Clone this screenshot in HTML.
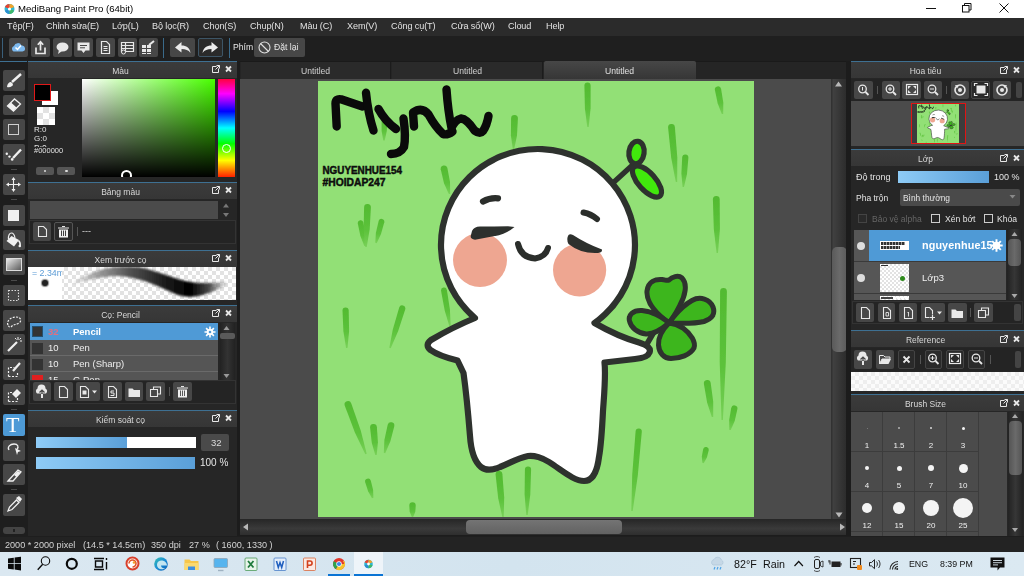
<!DOCTYPE html>
<html><head><meta charset="utf-8">
<style>
*{box-sizing:border-box;margin:0;padding:0}
html,body{width:1024px;height:576px;overflow:hidden;background:#1f1f1f;font-family:"Liberation Sans",sans-serif;font-size:9px;color:#dcdcdc}
.a{position:absolute}
.t{position:absolute;white-space:nowrap}
.tb{position:absolute;background:#474747;border-radius:2px}
.ph{position:absolute;height:17px;padding-right:24px;background:linear-gradient(#3b3b3b,#363636);border-top:1px solid #3e7092;color:#d8d8d8;text-align:center;font-size:8.500px;line-height:18px}
.pb{position:absolute;background:#262626}
.chk{background-color:#fff;background-image:linear-gradient(45deg,#e2e2e2 25%,transparent 25%,transparent 75%,#e2e2e2 75%),linear-gradient(45deg,#e2e2e2 25%,transparent 25%,transparent 75%,#e2e2e2 75%);background-size:8px 8px;background-position:0 0,4px 4px}
.bl{background:linear-gradient(90deg,#8ecbf6,#5a9fd8)}
svg{position:absolute;overflow:visible}
.t,.ph,#bsg div{-webkit-font-smoothing:antialiased;will-change:transform}
</style></head><body>
<!-- title bar -->
<div class="a" style="left:0;top:0;width:1024px;height:18px;background:#fff"></div>
<svg style="left:4px;top:3px" width="11" height="12" viewBox="0 0 11 12"><circle cx="5.5" cy="6" r="5" fill="#2fb7d6"/><path d="M5.5 1a5 5 0 0 0-4.6 3l4.6 2z" fill="#e8432e"/><path d="M5.5 1a5 5 0 0 1 4.6 3L5.5 6z" fill="#f2a32a"/><path d="M1 7.5a5 5 0 0 0 4.5 3.5V6z" fill="#2c8fd0"/><path d="M10 7.5A5 5 0 0 1 5.500 11V6z" fill="#3fb86a"/><circle cx="5.5" cy="6" r="1.6" fill="#fff"/></svg>
<div class="t" style="left:18px;top:3px;font-size:9.6px;color:#000">MediBang Paint Pro (64bit)</div>
<svg style="left:0;top:0" width="1024" height="18" viewBox="0 0 1024 18" fill="none" stroke="#111" stroke-width="1"><path d="M926 8.500h10"/><rect x="962.500" y="5.500" width="6.500" height="6.500"/><path d="M964.500 5.500v-2h6.500v6.500h-2"/><path d="M999.500 3.500l9 9M1008.500 3.500l-9 9"/></svg>
<!-- menu bar -->
<div class="a" style="left:0;top:18px;width:1024px;height:18px;background:#2b2b2b"></div>
<div class="a" id="menu" style="left:0;top:18px;width:1024px;height:18px;font-size:9.1px;letter-spacing:-0.1px;color:#e2e2e2">
<span class="t" style="left:7px;top:3px">Tệp(F)</span>
<span class="t" style="left:46px;top:3px">Chỉnh sửa(E)</span>
<span class="t" style="left:112px;top:3px">Lớp(L)</span>
<span class="t" style="left:152px;top:3px">Bộ lọc(R)</span>
<span class="t" style="left:203px;top:3px">Chọn(S)</span>
<span class="t" style="left:250px;top:3px">Chụp(N)</span>
<span class="t" style="left:300px;top:3px">Màu (C)</span>
<span class="t" style="left:347px;top:3px">Xem(V)</span>
<span class="t" style="left:391px;top:3px">Công cụ(T)</span>
<span class="t" style="left:451px;top:3px">Cửa sổ(W)</span>
<span class="t" style="left:508px;top:3px">Cloud</span>
<span class="t" style="left:546px;top:3px">Help</span>
</div>
<!-- toolbar -->
<div class="a" style="left:0;top:36px;width:1024px;height:25px;background:#1f1f1f"></div>
<div class="a" style="left:2px;top:38px;width:1px;height:20px;background:#3a5f7a"></div>
<div class="a" style="left:163px;top:38px;width:1px;height:20px;background:#3a6a8a"></div>
<div class="a" style="left:229px;top:38px;width:1px;height:20px;background:#3a6a8a"></div>
<div class="tb" style="left:9px;top:38px;width:19px;height:19px"></div>
<div class="tb" style="left:31px;top:38px;width:19px;height:19px"></div>
<div class="tb" style="left:53px;top:38px;width:19px;height:19px"></div>
<div class="tb" style="left:74px;top:38px;width:19px;height:19px"></div>
<div class="tb" style="left:96px;top:38px;width:19px;height:19px"></div>
<div class="tb" style="left:118px;top:38px;width:19px;height:19px"></div>
<div class="tb" style="left:139px;top:38px;width:19px;height:19px"></div>
<div class="tb" style="left:170px;top:38px;width:25px;height:19px"></div>
<div class="tb" style="left:198px;top:38px;width:25px;height:19px;background:#2a2a2a;border:1px solid #3d5566"></div>
<div class="tb" style="left:254px;top:38px;width:51px;height:19px"></div>
<svg style="left:0;top:36px" width="320" height="25" viewBox="0 0 320 25">
<!-- cloud -->
<path d="M13.500 15.500a3 3 0 0 1 .5-5.500 4 4 0 0 1 7.500-.5 3 3 0 0 1 1 6z" fill="#7db9ee"/><path d="M15.500 11.500l2 2 3.500-4" stroke="#fff" stroke-width="1.500" fill="none"/>
<!-- share -->
<path d="M36 11.500v6h9v-6M40.500 14.500v-8M37.800 8.800l2.700-3 2.700 3" stroke="#e8e8e8" stroke-width="1.700" fill="none"/>
<!-- bubble -->
<ellipse cx="62.500" cy="11" rx="6" ry="4.500" fill="#e8e8e8"/><path d="M59 14l-1 4 4-3z" fill="#e8e8e8"/>
<!-- comment -->
<path d="M77.500 6.500h12v8h-4l-2 2.500-2-2.500h-4z" fill="#e8e8e8"/><path d="M80 9.500h7M80 11.800h5" stroke="#474747" stroke-width="1"/>
<!-- doc -->
<path d="M101.500 5.500h5l3 3v9h-8z" fill="none" stroke="#e8e8e8" stroke-width="1.200"/><path d="M103.500 10.500h4M103.500 12.500h4M103.500 14.500h4" stroke="#e8e8e8" stroke-width="1"/>
<!-- list -->
<path d="M121.500 6.500h12v9h-12zM121.500 9.500h12M121.500 12.500h12M125.500 6.500v9" fill="none" stroke="#e8e8e8" stroke-width="1.200"/><circle cx="123.500" cy="16" r="2" fill="#474747" stroke="#e8e8e8"/>
<!-- grid pen -->
<path d="M142 9h4v3h-4zM147 9h4v3h-4zM142 13h4v3h-4zM147 13h4v3h-4zM142 17h4v1h-4zM147 17h4v1h-4z" fill="#e8e8e8"/><path d="M149 9l5-4" stroke="#e8e8e8" stroke-width="2"/>
<!-- undo -->
<path d="M175 11.500l6.500-5.500v3.500c5 0 8 2 9 7.500-2-3-5-4-9-4v3.500z" fill="#ececec"/>
<!-- redo -->
<path d="M218 11.500l-6.500-5.500v3.500c-5 0-8 2-9 7.500 2-3 5-4 9-4v3.500z" fill="#ececec"/>
<!-- reset -->
<circle cx="264.500" cy="11.500" r="5.500" fill="none" stroke="#e0e0e0" stroke-width="1.100"/><path d="M260.500 7.500l8 8" stroke="#e0e0e0" stroke-width="1.100"/>
</svg>
<div class="t" style="left:233px;top:42px;font-size:8.600px;color:#e6e6e6">Phím</div>
<div class="t" style="left:274px;top:42px;font-size:8.600px;color:#e6e6e6">Đặt lại</div>
<!-- left toolbox -->
<div class="a" style="left:0;top:61px;width:28px;height:475px;background:#1e1e1e"></div>
<div class="a" style="left:0;top:61px;width:27px;height:1px;background:#3e7092"></div>

<div id="lt">
<div class="tb" style="left:3px;top:70px;width:22px;height:21px"></div>
<div class="tb" style="left:3px;top:95px;width:22px;height:20px"></div>
<div class="tb" style="left:3px;top:119px;width:22px;height:21px"></div>
<div class="tb" style="left:3px;top:144px;width:22px;height:21px"></div>
<div class="tb" style="left:3px;top:174px;width:22px;height:21px"></div>
<div class="tb" style="left:3px;top:205px;width:22px;height:21px"></div>
<div class="tb" style="left:3px;top:230px;width:22px;height:20px"></div>
<div class="tb" style="left:3px;top:254px;width:22px;height:21px"></div>
<div class="tb" style="left:3px;top:285px;width:22px;height:21px"></div>
<div class="tb" style="left:3px;top:310px;width:22px;height:21px"></div>
<div class="tb" style="left:3px;top:334px;width:22px;height:21px"></div>
<div class="tb" style="left:3px;top:359px;width:22px;height:21px"></div>
<div class="tb" style="left:3px;top:384px;width:22px;height:21px"></div>
<div class="tb" style="left:3px;top:414px;width:22px;height:22px;background:#4d9ad6"></div>
<div class="tb" style="left:3px;top:440px;width:22px;height:21px"></div>
<div class="tb" style="left:3px;top:464px;width:22px;height:21px"></div>
<div class="tb" style="left:3px;top:494px;width:22px;height:22px"></div>
<div class="tb" style="left:3px;top:527px;width:22px;height:7px;border-radius:3px;background:#444"></div>
<div class="a" style="left:11px;top:169px;width:6px;height:1px;background:#4a4a4a"></div>
<div class="a" style="left:11px;top:199px;width:6px;height:1px;background:#4a4a4a"></div>
<div class="a" style="left:11px;top:280px;width:6px;height:1px;background:#4a4a4a"></div>
<div class="a" style="left:11px;top:409px;width:6px;height:1px;background:#4a4a4a"></div>
<div class="a" style="left:11px;top:489px;width:6px;height:1px;background:#4a4a4a"></div>
</div>
<svg style="left:0;top:0" width="28" height="540" viewBox="0 0 28 540" fill="none" stroke="#f0f0f0">
<!-- brush -->
<path d="M21 74l-9 8" stroke-width="2.400"/><path d="M7 87c0-3 2-5 4-5l2 2c0 2-3 4-6 3z" fill="#f0f0f0" stroke="none"/>
<!-- eraser -->
<path d="M7.500 106l7-7 6 5-7 7z" stroke-width="1.300"/><path d="M7.500 106l3.500-3.500 5.500 5-3.500 3.500z" fill="#f0f0f0" stroke="none"/>
<!-- rect -->
<rect x="8.500" y="124.500" width="10" height="10" stroke-width="1" stroke="#cfcfcf"/>
<!-- dotted pen -->
<path d="M21 149.500l-8 8.500" stroke-width="2.400"/><circle cx="6.800" cy="153.800" r="1.200" fill="#f0f0f0" stroke="none"/><circle cx="9.500" cy="156.600" r="1.200" fill="#f0f0f0" stroke="none"/><circle cx="12.200" cy="159.400" r="1.300" fill="#f0f0f0" stroke="none"/>
<!-- move -->
<path d="M13.500 178.500v12M7.500 184.500h12" stroke-width="1.100"/><path d="M13.500 177l-2 3h4zM13.500 192l-2-3h4zM6 184.500l3-2v4zM21 184.500l-3-2v4z" stroke="none" fill="#f0f0f0"/>
<!-- fill rect -->
<rect x="8" y="210" width="11" height="11" fill="#f0f0f0" stroke="none"/>
<!-- bucket -->
<path d="M6.500 241l5-5 7.500 4-5 6.500z" fill="#f0f0f0" stroke="none"/><path d="M8.500 239.500c-.5-4 1-6.500 3-6.500s3 2 3.500 5" stroke-width="1.200"/><path d="M18.500 240.500c1.500 1.500 2 3.500 1.500 5.500" stroke-width="1.500"/><circle cx="19.800" cy="246" r="1.300" fill="#f0f0f0" stroke="none"/>
<!-- gradient -->
<defs><linearGradient id="gg" x1="0" y1="0" x2="1" y2="1"><stop offset="0" stop-color="#eee"/><stop offset="1" stop-color="#555"/></linearGradient></defs>
<rect x="6.500" y="258.500" width="15" height="12" fill="url(#gg)" stroke="#ddd" stroke-width="1"/>
<!-- select rect -->
<rect x="8.500" y="290.500" width="10" height="10" stroke-width="1.100" stroke="#ddd" stroke-dasharray="1.500 1.500"/>
<!-- lasso -->
<path d="M8 325c-2-4 3-8 8-8s6 4 3 6-5 1-7 3-3 1-4-1z" stroke-width="1.200" stroke-dasharray="2 1.300"/>
<!-- wand -->
<path d="M8 351l9-9" stroke-width="2.200"/><path d="M18 337v3M15 338l1.500 1.500M21 338l-1.500 1.500M22 341h-2" stroke-width="1"/>
<!-- select pen -->
<path d="M8.500 376.500v-9h6M8.500 376.500h9v-5" stroke-width="1.200" stroke-dasharray="2 1.500"/><path d="M20 363l-7 8" stroke-width="2.200"/>
<!-- select eraser -->
<path d="M8.500 401.500v-9h4M8.500 401.500h9v-4" stroke-width="1.200" stroke-dasharray="2 1.500"/><path d="M12 394l5-5 4 4-5 5z" fill="#f0f0f0" stroke="none"/>
<!-- lasso pointer -->
<path d="M9 450c-2-3 1-6 5-6s5 3 3 5" stroke-width="1.300"/><path d="M15 448l6 3-3 1-1 3z" fill="#f0f0f0" stroke="none"/>
<!-- knife -->
<path d="M8 481l10-11 3 2-8 9z" stroke-width="1.300"/><path d="M14 475l4-4 2.500 2-4 4z" fill="#f0f0f0" stroke="none"/>
<!-- eyedropper -->
<path d="M8 511l1.500-4 7-7 2.500 2.500-7 7z" stroke-width="1.300"/><path d="M16 498l3-2 3 3-2 3z" fill="#f0f0f0" stroke="none"/>
</svg>
<div class="t" style="left:6px;top:413px;font-family:'Liberation Serif',serif;font-size:22px;line-height:24px;color:#fff">T</div>
<div class="a" style="left:13px;top:529px;width:2px;height:3px;background:#222"></div>
<!-- left panels -->
<div class="pb" style="left:28px;top:61px;width:209px;height:475px"></div>
<div class="a" style="left:237px;top:61px;width:3px;height:475px;background:#1c1c1c"></div>
<!-- Mau -->
<div class="ph" style="left:28px;top:61px;width:209px">Màu</div>
<div class="a" style="left:34px;top:84px;width:17px;height:17px;background:#000;border:1px solid #e01818;z-index:2"></div>
<div class="a" style="left:42px;top:91px;width:16px;height:14px;background:#fff"></div>
<div class="a chk" style="left:37px;top:107px;width:18px;height:18px;background-size:12px 12px;background-position:0 0,6px 6px"></div>
<div class="t" style="left:34px;top:125px;font-size:8px;color:#e0e0e0">R:0</div>
<div class="t" style="left:34px;top:134px;font-size:8px;color:#e0e0e0">G:0</div>
<div class="a" style="left:34px;top:143px;width:20px;height:4px;overflow:hidden"><div class="t" style="left:0;top:0;font-size:8.500px;color:#e0e0e0">B:0</div></div>
<div class="t" style="left:34px;top:146px;font-size:7.500px;color:#e0e0e0">#000000</div>
<div class="tb" style="left:36px;top:167px;width:18px;height:8px;background:#555"></div>
<div class="tb" style="left:57px;top:167px;width:18px;height:8px;background:#555"></div>
<div class="a" style="left:44px;top:170px;width:2px;height:2px;background:#ddd;border-radius:1px"></div>
<div class="a" style="left:65px;top:170px;width:3px;height:2px;background:#ddd;border-radius:1px"></div>
<div class="a" style="left:82px;top:79px;width:133px;height:98px;background:linear-gradient(to top,#000,rgba(0,0,0,0)),linear-gradient(to right,#fff,#48ff00)"></div>
<div class="a" style="left:218px;top:79px;width:17px;height:98px;background:linear-gradient(to bottom,#ff0040 0%,#ff00ff 15%,#0000ff 33%,#00ffff 50%,#00ff00 66%,#ffff00 83%,#ff2000 100%)"></div>
<div class="a" style="left:82px;top:170px;width:133px;height:7px;overflow:hidden"><div class="a" style="left:39px;top:0px;width:11px;height:11px;border:2px solid #fff;border-radius:50%"></div></div>
<div class="a" style="left:222px;top:144px;width:9px;height:9px;border:1.500px solid #fff;border-radius:50%"></div>
<!-- Bang mau -->
<div class="ph" style="left:28px;top:182px;width:209px">Bảng màu</div>
<div class="a" style="left:30px;top:201px;width:188px;height:18px;background:#4b4b4b"></div>
<div class="a" style="left:29px;top:220px;width:207px;height:24px;border:1px solid #333;background:#242424"></div>
<div class="tb" style="left:33px;top:222px;width:18px;height:19px"></div>
<div class="tb" style="left:54px;top:222px;width:19px;height:19px;background:#2a2a2a;border:1px solid #555"></div>
<div class="a" style="left:77px;top:227px;width:1px;height:9px;background:#555"></div>
<div class="t" style="left:82px;top:226px;font-size:9px;color:#ddd">---</div>
<!-- Xem truoc co -->
<div class="ph" style="left:28px;top:250px;width:209px">Xem trước cọ</div>
<div class="a chk" style="left:28px;top:267px;width:208px;height:33px;background-size:8px 8px;background-position:0 0,4px 4px"></div>
<div class="a" style="left:28px;top:267px;width:34px;height:33px;background:#fff"></div>
<div class="a" style="left:28px;top:267px;width:34px;height:12px;overflow:hidden"><div class="t" style="left:3.500px;top:1px;font-size:8.800px;color:#5b9bd5">= 2.34m</div></div>
<div class="a" style="left:42px;top:280px;width:6px;height:6px;background:#222;border-radius:50%;box-shadow:0 0 1px 1px #888"></div>
<!-- Co: Pencil -->
<div class="ph" style="left:28px;top:305px;width:209px">Cọ: Pencil</div>
<div class="a" style="left:30px;top:323px;width:188px;height:57px;background:#555;overflow:hidden">
 <div class="a" style="left:0;top:0;width:188px;height:17px;background:#4f9ad6"></div>
 <div class="a" style="left:0;top:32px;width:188px;height:1px;background:#6a6a6a"></div>
 <div class="a" style="left:0;top:48px;width:188px;height:1px;background:#6a6a6a"></div>
 <div class="a" style="left:2px;top:3px;width:11px;height:11px;background:#333;border:1px solid #24506f"></div>
 <div class="a" style="left:2px;top:20px;width:11px;height:11px;background:#333"></div>
 <div class="a" style="left:2px;top:36px;width:11px;height:11px;background:#333"></div>
 <div class="a" style="left:2px;top:52px;width:11px;height:11px;background:#e02020"></div>
 <div class="t" style="left:18px;top:3px;font-size:9.500px;font-weight:bold;color:#e07080">32</div>
 <div class="t" style="left:43px;top:3px;font-size:9.500px;font-weight:bold;color:#fff">Pencil</div>
 <div class="t" style="left:18px;top:19px;font-size:9.500px;color:#eee">10</div>
 <div class="t" style="left:43px;top:19px;font-size:9.500px;color:#eee">Pen</div>
 <div class="t" style="left:18px;top:35px;font-size:9.500px;color:#eee">10</div>
 <div class="t" style="left:43px;top:35px;font-size:9.500px;color:#eee">Pen (Sharp)</div>
 <div class="t" style="left:18px;top:51px;font-size:9.500px;color:#eee">15</div>
 <div class="t" style="left:43px;top:51px;font-size:9.500px;color:#eee">G Pen</div>
</div>
<svg style="left:204px;top:326px" width="12" height="12" viewBox="0 0 12 12"><circle cx="6" cy="6" r="3.300" fill="#fff"/><path d="M6 0.500v11M0.500 6h11M2.100 2.100l7.800 7.800M9.900 2.100l-7.800 7.800" stroke="#fff" stroke-width="1.600"/><circle cx="6" cy="6" r="1.300" fill="#4f9ad6"/></svg>
<div class="a" style="left:220px;top:323px;width:15px;height:57px;background:linear-gradient(90deg,#222,#333,#222)"></div>
<div class="a" style="left:220px;top:333px;width:15px;height:6px;background:#5a5a5a;border-radius:2px"></div>
<div class="a" style="left:29px;top:380px;width:207px;height:24px;border:1px solid #333;background:#242424"></div>
<div class="tb" style="left:33px;top:382px;width:18px;height:19px"></div>
<div class="tb" style="left:54px;top:382px;width:19px;height:19px"></div>
<div class="tb" style="left:76px;top:382px;width:24px;height:19px"></div>
<div class="tb" style="left:103px;top:382px;width:19px;height:19px"></div>
<div class="tb" style="left:125px;top:382px;width:18px;height:19px"></div>
<div class="tb" style="left:146px;top:382px;width:19px;height:19px"></div>
<div class="a" style="left:169px;top:387px;width:1px;height:9px;background:#555"></div>
<div class="tb" style="left:173px;top:382px;width:19px;height:19px"></div>
<!-- Kiem soat co -->
<div class="ph" style="left:28px;top:410px;width:209px">Kiểm soát cọ</div>
<div class="a" style="left:36px;top:437px;width:160px;height:11px;background:#fff"></div>
<div class="a bl" style="left:36px;top:437px;width:91px;height:11px"></div>
<div class="a" style="left:201px;top:434px;width:28px;height:17px;background:#4a4a4a;border-radius:2px"></div>
<div class="t" style="left:211px;top:437px;font-size:9.500px;color:#ddd">32</div>
<div class="a bl" style="left:36px;top:456.500px;width:159px;height:12px"></div>
<div class="t" style="left:200px;top:457px;font-size:10px;color:#e6e6e6">100 %</div>
<!-- panel-header icons -->
<svg style="left:0;top:0" width="240" height="430" viewBox="0 0 240 430" fill="none" stroke="#e8e8e8">
<g id="phi"><path d="M216.500 66.500h-4v6h6v-4" stroke-width="1"/><path d="M215.500 69.500l4-4M216.500 65.500h3v3" stroke-width="1"/><path d="M226 66.500l5 5M231 66.500l-5 5" stroke-width="1.800"/></g>
<use href="#phi" y="121"/><use href="#phi" y="189"/><use href="#phi" y="244"/><use href="#phi" y="349"/>
<!-- palette arrows -->
<path d="M223 207.500l3-4 3 4zM223 213l3 4 3-4z" fill="#777" stroke="none"/>
<!-- brush list arrows -->
<path d="M223.500 330l3-4 3 4zM223.500 374l3 4 3-4z" fill="#999" stroke="none"/>
<!-- palette toolbar: new, trash -->
<path d="M38.500 226.500h5l3 3v7h-8z" stroke-width="1.100"/>
<path d="M59 229.500h9v8h-9z" fill="#f0f0f0" stroke="none"/><path d="M58 228h11M62 226.500h3" stroke-width="1.200"/><path d="M61.500 230.500v5.500M63.500 230.500v5.500M65.500 230.500v5.500" stroke="#2a2a2a" stroke-width="0.900"/>
<!-- brush toolbar icons -->
<path d="M37 393.500a3 3 0 0 1 .5-5 4 4 0 0 1 8 0 3 3 0 0 1 .5 5z" fill="#e8e8e8" stroke="none"/><path d="M42 390v8M39.500 392.500l2.500-2.500 2.500 2.500" stroke="#474747" stroke-width="1.200"/><path d="M42 394v4" stroke="#e8e8e8" stroke-width="2"/>
<path d="M59.500 386.500h5l3 3v8h-8z" stroke-width="1.100"/>
<path d="M80.500 386.500h5l3 3v8h-8z" stroke-width="1.100"/><rect x="82.500" y="390.500" width="4" height="4" fill="#e8e8e8" stroke="none"/><path d="M92 390.500h5l-2.500 3z" fill="#e8e8e8" stroke="none"/>
<path d="M108.500 386.500h5l3 3v8h-8z" stroke-width="1.100"/><path d="M114 391h-3v2h3v2.500h-3.500" stroke-width="1"/>
<path d="M128.500 388.500h4l1.500 1.500h6v7h-11.500z" fill="#e8e8e8" stroke="none"/>
<path d="M150.500 389.500h7v7h-7z" stroke-width="1.100"/><path d="M153.500 389.500v-2.500h7v7h-3" stroke-width="1.100"/>
<path d="M178 389.500h9v8h-9z" fill="#f0f0f0" stroke="none"/><path d="M177 388h11M181 386.500h3" stroke-width="1.200"/><path d="M180.500 390.500v5.500M182.500 390.500v5.500M184.500 390.500v5.500" stroke="#474747" stroke-width="0.900"/>
</svg>
<!-- brush preview stroke -->
<svg style="left:62px;top:267px" width="174" height="33" viewBox="0 0 174 33"><defs><linearGradient id="bs" x1="12" x2="165" gradientUnits="userSpaceOnUse"><stop offset="0" stop-color="#aaa" stop-opacity="0.250"/><stop offset="0.150" stop-color="#888" stop-opacity="0.800"/><stop offset="0.350" stop-color="#555"/><stop offset="0.600" stop-color="#1a1a1a"/><stop offset="0.760" stop-color="#000"/><stop offset="0.880" stop-color="#333" stop-opacity="0.900"/><stop offset="1" stop-color="#888" stop-opacity="0.200"/></linearGradient><clipPath id="bsc"><rect width="174" height="33"/></clipPath><filter id="bf"><feGaussianBlur stdDeviation="0.900"/></filter></defs>
<path clip-path="url(#bsc)" filter="url(#bf)" d="M12,14.500C20,10 28,6.500 33,4.700C42,1.500 50,0 56,0C64,-0.500 70,-0.500 77,0.300C85,1.500 90,3.500 96.500,5.600C104,8 110,10.500 117.500,12.600C125,14.800 132,16 138.600,16.100C148,16.200 156,15.500 164,14.400L164,17.900C159,21 153,24 147.400,25.800C140,28.500 133,30 126.300,29.700C120,29.500 115,28 110.500,25.800C104,22.500 98,20 93,17.900C86,15 80,13 73.600,11.700C67,10.200 60,9 54.200,9.100C47,9.300 40,10.500 33,11.700C26,13 19,15 12,17Z" fill="url(#bs)"/></svg>
<!-- center -->
<div class="a" style="left:240px;top:61px;width:610px;height:475px;background:#4b4b4b"></div>
<div class="a" style="left:240px;top:61px;width:610px;height:18px;background:#252525"></div>
<div class="a" style="left:240px;top:61px;width:610px;height:1px;background:#1a1a1a"></div>
<div class="a" style="left:241px;top:62px;width:150px;height:17px;background:#2a2a2a;border-right:1px solid #1c1c1c"></div>
<div class="a" style="left:392px;top:62px;width:151px;height:17px;background:#2a2a2a;border-right:1px solid #1c1c1c"></div>
<div class="a" style="left:544px;top:61px;width:152px;height:18px;background:linear-gradient(#474747,#363636);border-radius:2px 2px 0 0"></div>
<div class="t" style="left:300.500px;top:66px;font-size:8.600px;color:#d0d0d0">Untitled</div>
<div class="t" style="left:452.500px;top:66px;font-size:8.600px;color:#d0d0d0">Untitled</div>
<div class="t" style="left:604.500px;top:66px;font-size:8.600px;color:#e0e0e0">Untitled</div>
<!-- scrollbars -->
<div class="a" style="left:831px;top:79px;width:16px;height:440px;background:linear-gradient(90deg,#2e2e2e,#404040 15%,#2b2b2b)"></div>
<div class="a" style="left:832px;top:246.500px;width:14.500px;height:105.500px;background:linear-gradient(90deg,#5a5a5a,#6a6a6a,#5a5a5a);border-radius:5px"></div>
<div class="a" style="left:240px;top:519px;width:606px;height:16px;background:linear-gradient(#262626,#3a3a3a 60%,#2e2e2e)"></div>
<div class="a" style="left:466px;top:519.500px;width:156px;height:14.500px;background:linear-gradient(#747474,#626262);border-radius:4px"></div>
<div class="a" style="left:240px;top:535px;width:610px;height:1px;background:#1c1c1c"></div>
<div class="a" style="left:846px;top:61px;width:5px;height:475px;background:#1c1c1c"></div>
<svg style="left:240px;top:79px" width="610" height="458" viewBox="0 0 610 458"><path d="M595,7.500l3.500,-5 3.500,5zM595.500,433.500l3.500,5 3.500,-5zM8,451.500l-5,-3.500 5,-3.500zM600,451.500l5,-3.500 -5,-3.500z" fill="#b8b8b8"/></svg>
<!-- canvas art -->
<svg style="left:318px;top:81px" width="436" height="436" viewBox="0 0 436 436">
<defs><linearGradient id="gg2" x1="0" y1="0" x2="0" y2="1"><stop offset="0" stop-color="#52ba30"/><stop offset="0.6" stop-color="#5cc23b"/><stop offset="1" stop-color="#78d058"/></linearGradient><filter id="gb" x="-50%" y="-10%" width="200%" height="120%"><feGaussianBlur stdDeviation="0.500"/></filter></defs>
<g id="art"><rect width="436" height="436" fill="#92e076"/>
<g id="grass" fill="url(#gg2)" filter="url(#gb)">
<!--GRASS--><path d="M193.1,37.4A3.4,3.4 0 0 1 199.9,37.6L199.0,54.4L196.2,68.0L194.8,68.0L192.9,54.2Z"/>
<path d="M63.6,38.4A2.9,2.9 0 0 1 69.4,38.6L68.8,50.1L66.7,59.5L65.3,59.5L63.6,50.0Z"/>
<path d="M122.7,88.2A3.4,3.4 0 0 1 129.3,86.8L132.0,100.9L132.2,112.9L130.8,113.1L126.0,102.2Z"/>
<path d="M39.7,142.0A2.9,2.9 0 0 1 45.3,141.0L47.5,153.9L47.7,164.9L46.3,165.1L42.4,154.9Z"/>
<path d="M46.1,126.4A3.4,3.4 0 0 1 52.9,126.6L51.7,148.3L48.7,166.0L47.3,166.0L45.6,148.1Z"/>
<path d="M60.7,139.8A2.9,2.9 0 0 1 66.3,141.2L63.0,153.0L58.7,162.2L57.3,161.8L57.9,151.7Z"/>
<path d="M266.4,4.5A3.1,3.1 0 0 1 272.6,4.5L272.6,27.3L270.7,46.0L269.3,46.0L266.9,27.4Z"/>
<path d="M396.9,9.1A3.1,3.1 0 0 1 403.1,7.9L405.3,21.5L405.2,32.9L403.8,33.1L399.7,22.5Z"/>
<path d="M350.1,46.8A3.4,3.4 0 0 1 356.9,46.2L359.3,76.2L359.2,100.9L357.8,101.1L353.2,76.8Z"/>
<path d="M364.2,76.3A3.1,3.1 0 0 1 370.4,76.7L369.0,92.9L366.0,106.0L364.6,106.0L363.4,92.5Z"/>
<path d="M394.9,118.6A3.4,3.4 0 0 1 401.7,118.4L401.9,147.9L400.0,172.0L398.6,172.0L395.8,148.0Z"/>
<path d="M123.1,210.0A2.9,2.9 0 0 1 128.9,209.0L131.9,228.6L132.7,244.9L131.3,245.1L126.7,229.5Z"/>
<path d="M24.5,229.6A3.1,3.1 0 0 1 30.7,229.4L31.1,250.0L29.5,267.0L28.1,267.0L25.4,250.2Z"/>
<path d="M81.2,226.6A3.1,3.1 0 0 1 87.2,228.4L80.2,250.1L72.7,267.2L71.3,266.8L74.8,248.4Z"/>
<path d="M402.1,210.5A3.4,3.4 0 0 1 408.9,210.5L407.8,281.2L404.9,339.0L403.5,339.0L401.7,281.1Z"/>
<path d="M26.8,324.7A3.4,3.4 0 0 1 33.2,322.3L42.8,349.7L48.7,372.8L47.3,373.2L37.0,351.8Z"/>
<path d="M52.1,346.8A3.4,3.4 0 0 1 58.9,346.2L59.9,361.3L58.7,373.9L57.3,374.1L53.8,361.9Z"/>
<path d="M69.7,343.7A3.4,3.4 0 0 1 76.3,345.3L72.4,360.3L67.2,372.2L65.8,371.8L66.4,358.9Z"/>
<path d="M47.2,401.3A2.9,2.9 0 0 1 52.8,399.7L55.1,408.9L55.4,416.8L54.0,417.2L50.1,410.3Z"/>
<path d="M91.3,424.5A3.1,3.1 0 0 1 97.7,424.5L97.3,430.8L95.2,436.0L93.8,436.0L91.7,430.8Z"/>
<path d="M177.6,393.8A3.4,3.4 0 0 1 184.4,393.2L186.2,416.6L185.7,435.9L184.3,436.1L180.2,417.2Z"/>
<path d="M206.9,388.4A3.1,3.1 0 0 1 213.1,388.6L212.3,413.6L209.7,434.0L208.3,434.0L206.6,413.5Z"/>
<path d="M317.6,350.2A3.1,3.1 0 0 1 323.8,350.8L319.8,394.5L314.7,430.1L313.3,429.9L314.2,394.0Z"/>
<path d="M385.9,303.0A3.4,3.4 0 0 1 392.7,302.0L395.2,320.5L395.2,335.9L393.8,336.1L389.1,321.4Z"/>
<path d="M413.2,326.9A3.1,3.1 0 0 1 419.4,328.1L416.7,339.9L412.7,349.1L411.3,348.9L411.2,338.8Z"/>
<path d="M385.2,367.9A2.9,2.9 0 0 1 390.8,369.1L388.9,376.5L385.7,382.2L384.3,381.8L383.8,375.4Z"/><!--/GRASS-->
</g>
<!--BODY-->
<g stroke="#2e322e" stroke-linejoin="round" stroke-linecap="round">
<!-- sprout -->
<path d="M296,101L313.500,85" fill="none" stroke-width="5.200"/>
<ellipse cx="318.500" cy="71.500" rx="7.600" ry="11.300" transform="rotate(8 318.500 71.500)" fill="#41e80c" stroke-width="5.200"/>
<ellipse cx="329" cy="100.500" rx="19.500" ry="8.600" transform="rotate(48 329 100.500)" fill="#41e80c" stroke-width="5.200"/>
<!-- clover -->
<g fill="#3db61d" stroke-width="5">
<path d="M351,242L338,247.500L329.500,262" fill="none" stroke-width="5.500"/>
<path d="M351,242C340,234 328,222 329,210C330,200 338,198 344,198.500C348,199 349,200 351,199C354,196 360,193.500 364,197C370,203 367,215 362,224C359,230 355,237 351,242Z"/>
<path d="M351,242C358,232 366,224 374,219.500C382,215 392,218 395,226C397.500,233 394,238 386,240.500C376,243 362,242.500 351,242Z"/>
<path d="M351,242C344,236 334,230.500 324,229.500C315,229 310,234 311.500,240C313,247 320,252 328,253C336,253.500 344,248 351,242Z"/>
<path d="M351,242C345,248 340,256 340.500,264C341,272 346,277.500 353,277.500C362,277.500 372,274 376,267C378,261 373,253 365,247C360,244 355,242.500 351,242Z"/>
</g>
<!-- body -->
<path d="M157,237A97,96 0 1 1 276.500,242Q300,255.500 321,261.500Q334,265.500 331.500,271.500Q329.500,277 317,278L286.500,281.500C288,295 286,315 285,330C284,350 283,365 281,376C279,392 274,400 266,400C256,400 245,390 231,381C225,377 216,374 210,375C200,377 192,382 182,386C175,389 168,390 163,386C157,381 153,370 152,355C150,330 148,310 145.500,292L139.500,279.500Q121,275 112.500,269Q106.500,264 113,259Q135,246 157,237Z" fill="#fff" stroke-width="6.200"/>
</g>
<!-- face -->
<circle cx="162" cy="179" r="27" fill="#eea691"/>
<circle cx="261.600" cy="189" r="26.600" fill="#eea691"/>
<g stroke="#2b2e2b" stroke-linecap="round" fill="none">
<path d="M154,150Q156,145.500 162,145.500L190,145.300L196.500,146Q190,151.500 181,154.300L157,158.700Q151.500,158 153,154Z" fill="#2d302d" stroke="none"/>
<path d="M250.500,154Q252,152.300 255,154Q268,162.500 284,168.500Q284.500,171.500 280,172Q263,173 250.500,163Q248,158 250.500,154Z" fill="#2d302d" stroke="none"/>
<path d="M165,120.500Q172,116.500 180,117.300" stroke-width="6.200"/>
<path d="M265.500,131.500Q273,133 279,138" stroke-width="6"/>
<path d="M200,163Q203,176.500 217,177.500Q227.500,176 230,167" stroke-width="6"/>
</g>
<!--/BODY-->
<!--TEXT-->
<g stroke="#0a0a0a" stroke-width="8.400" stroke-linecap="round" stroke-linejoin="round" fill="none">
<path d="M18.700,45.500L17.500,22.500Q17.500,17.300 23,18.300L44.500,25.500"/>
<path d="M48,11.800Q50,32 55.500,49.500"/>
<path d="M60.500,28Q67,40 78,48"/>
<path d="M85.500,37.500Q88,55 86,66Q82,73 73,73"/>
<path d="M96,45.500L95,31.500Q104,25.500 110.500,33.500Q117,45.500 125,53Q129,54.500 134.500,50.500"/>
<path d="M128.500,8.500Q130,30 133.500,47Q137,39 143,37.500Q149,38 156.500,49.500Q162,53.500 165,50Q169,44 170.500,35"/>
</g>
<g font-family="Liberation Sans" font-weight="bold" fill="#0d0d0d" stroke="#0d0d0d" stroke-width="0.450" font-size="10.400">
<text x="4.500" y="92.800" textLength="79.500" lengthAdjust="spacingAndGlyphs">NGUYENHUE154</text>
<text x="4.500" y="104.500" textLength="63" lengthAdjust="spacingAndGlyphs">#HOIDAP247</text>
</g>
<!--/TEXT-->
</g></svg>
<!-- right panels -->
<div class="pb" style="left:851px;top:61px;width:173px;height:475px"></div>
<!-- Hoa tieu -->
<div class="ph" style="left:851px;top:61px;width:173px">Hoa tiêu</div>
<div class="a" style="left:851px;top:79px;width:173px;height:22px;background:#242424"></div>
<div class="tb" style="left:854px;top:81px;width:19px;height:18px"></div>
<div class="tb" style="left:882px;top:81px;width:18px;height:18px"></div>
<div class="tb" style="left:902px;top:81px;width:19px;height:18px"></div>
<div class="tb" style="left:924px;top:81px;width:18px;height:18px"></div>
<div class="tb" style="left:951px;top:81px;width:18px;height:18px"></div>
<div class="tb" style="left:971px;top:81px;width:19px;height:18px;background:#2a2a2a;border:1px solid #444"></div>
<div class="tb" style="left:993px;top:81px;width:18px;height:18px"></div>
<div class="a" style="left:877px;top:86px;width:1px;height:8px;background:#555"></div>
<div class="a" style="left:946px;top:86px;width:1px;height:8px;background:#555"></div>
<div class="a" style="left:1016px;top:82px;width:6px;height:16px;background:#444;border-radius:2px"></div>
<div class="a" style="left:851px;top:101px;width:173px;height:45px;background:#4b4b4b"></div>
<div class="a" style="left:910.500px;top:102.500px;width:55px;height:41.500px;border:1.500px solid #e01414;background:#3c3c3c"></div>
<svg style="left:917px;top:104px;overflow:hidden" width="42" height="39" viewBox="0 0 436 436" preserveAspectRatio="none"><use href="#art"/></svg>
<!-- Lop -->
<div class="ph" style="left:851px;top:149px;width:173px">Lớp</div>
<div class="t" style="left:856px;top:172px;font-size:9px;color:#e4e4e4">Độ trong</div>
<div class="a bl" style="left:898px;top:171px;width:91px;height:12px"></div>
<div class="t" style="left:994px;top:172px;font-size:9px;color:#e4e4e4">100 %</div>
<div class="t" style="left:856px;top:193px;font-size:8.500px;color:#e4e4e4">Pha trộn</div>
<div class="a" style="left:900px;top:189px;width:120px;height:17px;background:#4a4a4a;border-radius:2px"></div>
<div class="t" style="left:903px;top:193px;font-size:8.400px;color:#e4e4e4">Bình thường</div>
<div class="a" style="left:858px;top:214px;width:9px;height:9px;border:1px solid #444;background:#2a2a2a"></div>
<div class="t" style="left:872px;top:213.500px;font-size:8.500px;color:#666">Bảo vệ alpha</div>
<div class="a" style="left:931px;top:214px;width:9px;height:9px;border:1px solid #ccc;background:#262626"></div>
<div class="t" style="left:944.500px;top:213.500px;font-size:8.600px;color:#e4e4e4">Xén bớt</div>
<div class="a" style="left:984px;top:214px;width:9px;height:9px;border:1px solid #ccc;background:#262626"></div>
<div class="t" style="left:997px;top:213.500px;font-size:8.600px;color:#e4e4e4">Khóa</div>
<!-- layer list -->
<div class="a" style="left:854px;top:230px;width:152px;height:70px;background:#565656;overflow:hidden">
 <div class="a" style="left:0;top:0;width:152px;height:31px;background:#4f9ad6"></div>
 <div class="a" style="left:0;top:0;width:15px;height:71px;background:#565656"></div>
 <div class="a" style="left:0;top:31px;width:152px;height:1px;background:#3a3a3a"></div>
 <div class="a" style="left:0;top:63px;width:152px;height:1px;background:#3a3a3a"></div>
 <div class="a" style="left:3px;top:12px;width:8px;height:8px;border-radius:50%;background:#ddd"></div>
 <div class="a" style="left:3px;top:44px;width:8px;height:8px;border-radius:50%;background:#ddd"></div>
 <div class="a" style="left:26px;top:11px;width:29px;height:9px;background:#fff"></div>
 <div class="a" style="left:27px;top:12px;width:24px;height:3px;background:repeating-linear-gradient(90deg,#333 0 2px,#999 2px 3px)"></div>
 <div class="a" style="left:27px;top:16px;width:19px;height:3px;background:repeating-linear-gradient(90deg,#333 0 2px,#999 2px 3px)"></div>
 <div class="a chk" style="left:26px;top:34px;width:29px;height:28px;background-size:4px 4px;background-position:0 0,2px 2px"></div>
 <div class="a" style="left:46px;top:46px;width:5px;height:5px;border-radius:50%;background:#2e8a1c"></div>
 <div class="a" style="left:27px;top:35px;width:7px;height:1px;background:#333"></div>
 <div class="a chk" style="left:26px;top:66px;width:29px;height:8px;background-size:4px 4px"></div>
 <div class="a" style="left:27px;top:67px;width:12px;height:2px;background:#444"></div>
 <div class="t" style="left:68px;top:9px;font-weight:bold;font-size:10.800px;letter-spacing:0.1px;color:#fff">nguyenhue15</div>
 <div class="t" style="left:68px;top:42px;font-size:9.500px;color:#f0f0f0">Lớp3</div>
</div>
<svg style="left:990px;top:239px" width="13" height="13" viewBox="0 0 12 12"><circle cx="6" cy="6" r="3.500" fill="#fff"/><path d="M6 0.300v11.400M0.300 6h11.400M2 2l8 8M10 2l-8 8" stroke="#fff" stroke-width="1.800"/></svg>
<div class="a" style="left:1007px;top:229px;width:15px;height:71px;background:linear-gradient(90deg,#222,#363636,#222)"></div>
<div class="a" style="left:1008px;top:239px;width:13px;height:27px;background:linear-gradient(90deg,#555,#6a6a6a,#555);border-radius:4px"></div>
<div class="a" style="left:852px;top:301px;width:171px;height:23px;background:#242424;border:1px solid #333"></div>
<div class="tb" style="left:856px;top:303px;width:18px;height:19px"></div>
<div class="tb" style="left:878px;top:303px;width:17px;height:19px"></div>
<div class="tb" style="left:899px;top:303px;width:18px;height:19px"></div>
<div class="tb" style="left:921px;top:303px;width:24px;height:19px"></div>
<div class="tb" style="left:948px;top:303px;width:19px;height:19px"></div>
<div class="a" style="left:970px;top:308px;width:1px;height:9px;background:#555"></div>
<div class="tb" style="left:974px;top:303px;width:19px;height:19px"></div>
<div class="a" style="left:1014px;top:304px;width:7px;height:17px;background:#444;border-radius:2px"></div>
<!-- Reference -->
<div class="ph" style="left:851px;top:330px;width:173px">Reference</div>
<div class="a" style="left:851px;top:348px;width:173px;height:23px;background:#242424"></div>
<div class="tb" style="left:854px;top:350px;width:18px;height:19px"></div>
<div class="tb" style="left:876px;top:350px;width:18px;height:19px"></div>
<div class="tb" style="left:898px;top:350px;width:17px;height:19px;background:#2a2a2a;border:1px solid #444"></div>
<div class="a" style="left:920px;top:355px;width:1px;height:9px;background:#555"></div>
<div class="tb" style="left:925px;top:350px;width:17px;height:19px;background:#2a2a2a;border:1px solid #444"></div>
<div class="tb" style="left:946px;top:350px;width:18px;height:19px;background:#2a2a2a;border:1px solid #444"></div>
<div class="tb" style="left:968px;top:350px;width:17px;height:19px;background:#2a2a2a;border:1px solid #444"></div>
<div class="a" style="left:990px;top:355px;width:1px;height:9px;background:#555"></div>
<div class="a" style="left:1015px;top:351px;width:6px;height:17px;background:#444;border-radius:2px"></div>
<div class="a" style="left:851px;top:372px;width:173px;height:19px;background-color:#fbfbfb;background-image:linear-gradient(45deg,#eee 25%,transparent 25%,transparent 75%,#eee 75%),linear-gradient(45deg,#eee 25%,transparent 25%,transparent 75%,#eee 75%);background-size:8px 8px;background-position:0 0,4px 4px"></div>
<!-- Brush Size -->
<div class="ph" style="left:851px;top:394px;width:173px">Brush Size</div>
<div class="a" style="left:851px;top:412px;width:156px;height:124px;background:#4b4b4b"></div>
<div id="bsg" class="a" style="left:851px;top:412px;width:128px;height:124px;overflow:hidden;background:#3c3c3c">
<div class="a" style="left:0px;top:0px;width:31px;height:39px;background:#4b4b4b"></div>
<div class="a" style="left:15.50px;top:15.50px;width:1px;height:1px;border-radius:50%;background:#f4f4f4;opacity:0.35"></div>
<div class="a" style="left:0px;top:29px;width:32px;text-align:center;font-size:8px;line-height:9px;color:#f0f0f0">1</div>
<div class="a" style="left:32px;top:0px;width:31px;height:39px;background:#4b4b4b"></div>
<div class="a" style="left:47.25px;top:15.25px;width:1.5px;height:1.5px;border-radius:50%;background:#f4f4f4;opacity:0.55"></div>
<div class="a" style="left:32px;top:29px;width:32px;text-align:center;font-size:8px;line-height:9px;color:#f0f0f0">1.5</div>
<div class="a" style="left:64px;top:0px;width:31px;height:39px;background:#4b4b4b"></div>
<div class="a" style="left:79.00px;top:15.00px;width:2px;height:2px;border-radius:50%;background:#f4f4f4;opacity:0.85"></div>
<div class="a" style="left:64px;top:29px;width:32px;text-align:center;font-size:8px;line-height:9px;color:#f0f0f0">2</div>
<div class="a" style="left:96px;top:0px;width:31px;height:39px;background:#4b4b4b"></div>
<div class="a" style="left:110.50px;top:14.50px;width:3px;height:3px;border-radius:50%;background:#f4f4f4;opacity:1"></div>
<div class="a" style="left:96px;top:29px;width:32px;text-align:center;font-size:8px;line-height:9px;color:#f0f0f0">3</div>
<div class="a" style="left:0px;top:40px;width:31px;height:39px;background:#4b4b4b"></div>
<div class="a" style="left:14.00px;top:54.00px;width:4px;height:4px;border-radius:50%;background:#f4f4f4;opacity:1"></div>
<div class="a" style="left:0px;top:69px;width:32px;text-align:center;font-size:8px;line-height:9px;color:#f0f0f0">4</div>
<div class="a" style="left:32px;top:40px;width:31px;height:39px;background:#4b4b4b"></div>
<div class="a" style="left:45.50px;top:53.50px;width:5px;height:5px;border-radius:50%;background:#f4f4f4;opacity:1"></div>
<div class="a" style="left:32px;top:69px;width:32px;text-align:center;font-size:8px;line-height:9px;color:#f0f0f0">5</div>
<div class="a" style="left:64px;top:40px;width:31px;height:39px;background:#4b4b4b"></div>
<div class="a" style="left:77.00px;top:53.00px;width:6px;height:6px;border-radius:50%;background:#f4f4f4;opacity:1"></div>
<div class="a" style="left:64px;top:69px;width:32px;text-align:center;font-size:8px;line-height:9px;color:#f0f0f0">7</div>
<div class="a" style="left:96px;top:40px;width:31px;height:39px;background:#4b4b4b"></div>
<div class="a" style="left:107.50px;top:51.50px;width:9px;height:9px;border-radius:50%;background:#f4f4f4;opacity:1"></div>
<div class="a" style="left:96px;top:69px;width:32px;text-align:center;font-size:8px;line-height:9px;color:#f0f0f0">10</div>
<div class="a" style="left:0px;top:80px;width:31px;height:39px;background:#4b4b4b"></div>
<div class="a" style="left:11.00px;top:91.00px;width:10px;height:10px;border-radius:50%;background:#f4f4f4;opacity:1"></div>
<div class="a" style="left:0px;top:109px;width:32px;text-align:center;font-size:8px;line-height:9px;color:#f0f0f0">12</div>
<div class="a" style="left:32px;top:80px;width:31px;height:39px;background:#4b4b4b"></div>
<div class="a" style="left:42.00px;top:90.00px;width:12px;height:12px;border-radius:50%;background:#f4f4f4;opacity:1"></div>
<div class="a" style="left:32px;top:109px;width:32px;text-align:center;font-size:8px;line-height:9px;color:#f0f0f0">15</div>
<div class="a" style="left:64px;top:80px;width:31px;height:39px;background:#4b4b4b"></div>
<div class="a" style="left:72.00px;top:88.00px;width:16px;height:16px;border-radius:50%;background:#f4f4f4;opacity:1"></div>
<div class="a" style="left:64px;top:109px;width:32px;text-align:center;font-size:8px;line-height:9px;color:#f0f0f0">20</div>
<div class="a" style="left:96px;top:80px;width:31px;height:39px;background:#4b4b4b"></div>
<div class="a" style="left:102.00px;top:86.00px;width:20px;height:20px;border-radius:50%;background:#f4f4f4;opacity:1"></div>
<div class="a" style="left:96px;top:109px;width:32px;text-align:center;font-size:8px;line-height:9px;color:#f0f0f0">25</div>
<div class="a" style="left:0px;top:120px;width:31px;height:39px;background:#4b4b4b"></div>
<div class="a" style="left:32px;top:120px;width:31px;height:39px;background:#4b4b4b"></div>
<div class="a" style="left:64px;top:120px;width:31px;height:39px;background:#4b4b4b"></div>
<div class="a" style="left:96px;top:120px;width:31px;height:39px;background:#4b4b4b"></div>
</div>
<div class="a" style="left:1008px;top:412px;width:15px;height:124px;background:linear-gradient(90deg,#222,#363636,#222)"></div>
<div class="a" style="left:1009px;top:421px;width:13px;height:54px;background:linear-gradient(90deg,#555,#6a6a6a,#555);border-radius:4px"></div>
<svg style="left:851px;top:61px" width="173" height="480" viewBox="0 0 173 480" fill="none" stroke="#e8e8e8">
<g id="phr"><path d="M153.500 6.500h-4v6h6v-4" stroke-width="1"/><path d="M152.500 9.500l4-4M153.500 5.500h3v3" stroke-width="1"/><path d="M163 6.500l5 5M168 6.500l-5 5" stroke-width="1.800"/></g>
<use href="#phr" y="88"/><use href="#phr" y="269"/><use href="#phr" y="333"/>
<!-- scroll arrows -->
<path d="M160.500 175l3-4 3 4zM160.500 233l3 4 3-4zM161 357l3-4 3 4zM161 467l3 4 3-4z" fill="#aaa" stroke="none"/>
<path d="M158.500 134h6l-3 3.500z" fill="#888" stroke="none"/>
<!-- navigator icons -->
<g id="mag"><circle cx="11.500" cy="28" r="3.800" stroke-width="1.300"/><path d="M14.500 31l3 3" stroke-width="1.800"/></g>
<path d="M11.500 26v3.500" stroke-width="1"/>
<use href="#mag" x="27.500"/><path d="M37 28h4M39 26v4" stroke-width="1"/>
<rect x="55.500" y="23.500" width="11" height="10" stroke-width="1.200"/><path d="M57 25h3l-3 3zM65 25h-3l3 3zM57 32h3l-3-3zM65 32h-3l3-3z" fill="#e8e8e8" stroke="none"/>
<use href="#mag" x="69.500"/><path d="M79 28h4" stroke-width="1"/>
<circle cx="109" cy="29" r="5" stroke-width="1.600"/><circle cx="109" cy="29" r="2" fill="#e8e8e8" stroke="none"/><path d="M104 24l4 .5-2 3z" fill="#e8e8e8" stroke="none"/>
<rect x="125.500" y="24.500" width="9" height="8" fill="#e8e8e8" stroke="none"/><path d="M123.500 25v-2.500h3M136.500 25v-2.500h-3M123.500 32v2.500h3M136.500 32v2.500h-3" stroke-width="1.200"/>
<circle cx="151" cy="29" r="5" stroke-width="1.600"/><circle cx="151" cy="29" r="2" fill="#e8e8e8" stroke="none"/><path d="M156 24l-4 .5 2 3z" fill="#e8e8e8" stroke="none"/>
<!-- layer toolbar icons -->
<path d="M10.500 246.500h5l3 3v8h-8z" stroke-width="1.100"/>
<path d="M32.500 246.500h4l3 3v8h-7z" stroke-width="1.100"/><path d="M35 251.500h2.500v3.500h-2.500z" stroke-width="0.900"/>
<path d="M53.500 246.500h5l3 3v8h-8z" stroke-width="1.100"/><path d="M57.500 251v4.500M56.500 252l1-1" stroke-width="0.900"/>
<path d="M74.500 246.500h4l3 3v4M74.500 246.500v10h4" stroke-width="1.100"/><path d="M81.500 254v5M79 256.500h5" stroke-width="1.200"/><path d="M86 250.500h5l-2.500 3z" fill="#e8e8e8" stroke="none"/>
<path d="M100.500 248.500h4l1.500 1.500h6v7h-11.500z" fill="#e8e8e8" stroke="none"/>
<path d="M127.500 249.500h7v7h-7z" stroke-width="1.100"/><path d="M130.500 249.500v-2.500h7v7h-3" stroke-width="1.100"/>
<!-- reference toolbar icons -->
<path d="M7 299.500a3 3 0 0 1 .5-5 4 4 0 0 1 8 0 3 3 0 0 1 .5 5z" fill="#e8e8e8" stroke="none"/><path d="M12 296v8M9.500 298.500l2.500-2.500 2.500 2.500" stroke="#474747" stroke-width="1.200"/><path d="M12 300v4" stroke="#e8e8e8" stroke-width="2"/>
<path d="M28.500 294.500h4l1.500 1.500h5v2h-8l-2.500 5z" stroke-width="1"/><path d="M28.500 303l2.500-5h9l-2.500 5z" fill="#e8e8e8" stroke="none"/>
<path d="M52.500 295.500l6 6M58.500 295.500l-6 6" stroke-width="1.800"/>
<use href="#mag" x="70" y="269"/><path d="M79.500 297h4M81.500 295v4" stroke-width="1"/>
<rect x="98.500" y="292.500" width="11" height="10" stroke-width="1.200"/><path d="M100 294h3l-3 3zM108 294h-3l3 3zM100 301h3l-3-3zM108 301h-3l3-3z" fill="#e8e8e8" stroke="none"/>
<use href="#mag" x="113.500" y="269"/><path d="M123 297h4" stroke-width="1"/>
</svg>
<!-- status bar -->
<div class="a" style="left:0;top:536px;width:1024px;height:16px;background:#1e1e1e"></div>
<div class="a" style="left:0;top:537px;width:1024px;height:15px;background:#232323"></div>
<div class="t" style="left:5px;top:540px;font-size:9.100px;color:#d4d4d4;word-spacing:0px">2000 * 2000 pixel</div>
<div class="t" style="left:82.500px;top:540px;font-size:9.100px;color:#d4d4d4">(14.5 * 14.5cm)</div>
<div class="t" style="left:151px;top:540px;font-size:9.100px;color:#d4d4d4">350 dpi</div>
<div class="t" style="left:188.500px;top:540px;font-size:9.100px;color:#d4d4d4">27 %</div>
<div class="t" style="left:216px;top:540px;font-size:9.100px;color:#d4d4d4">( 1600, 1330 )</div>
<!-- taskbar -->
<div class="a" style="left:0;top:552px;width:1024px;height:24px;background:linear-gradient(90deg,#dbe8f1,#d3e4ef 50%,#dbe9f2)"></div>
<div class="a" style="left:354px;top:552px;width:29px;height:24px;background:#eef4f9"></div>
<div class="a" style="left:328px;top:574px;width:22px;height:2px;background:#0a74d4"></div>
<div class="a" style="left:354px;top:574px;width:29px;height:2px;background:#0a74d4"></div>
<svg style="left:0;top:552px" width="1024" height="24" viewBox="0 0 1024 24">
<!-- windows -->
<path d="M8 6.500l5.800-.8v5.500H8zM14.600 5.600L21 4.700v6.500h-6.400zM8 12h5.800v5.500L8 16.700zM14.600 12H21v6.500l-6.400-.9z" fill="#0a0a0a"/>
<!-- search -->
<circle cx="45.500" cy="9" r="4.200" fill="none" stroke="#0a0a0a" stroke-width="1.100"/><path d="M42.700 12.200l-5 5.500" stroke="#0a0a0a" stroke-width="1.300"/>
<!-- cortana -->
<circle cx="71.800" cy="11.800" r="5" fill="none" stroke="#0a0a0a" stroke-width="2.200"/>
<!-- task view -->
<path d="M94 6.500h10M94 17.500h10M95.500 9h7v6h-7z" fill="none" stroke="#0a0a0a" stroke-width="1.400"/><path d="M106.500 6v2M106.500 10v7.500" stroke="#0a0a0a" stroke-width="1.400"/>
<!-- red app -->
<circle cx="132.500" cy="11.500" r="6" fill="#fff" stroke="#d8402c" stroke-width="2"/><path d="M129 11.500a3.500 3.500 0 1 1 3.500 3.500" fill="none" stroke="#e2572a" stroke-width="1.600"/><circle cx="134" cy="10.500" r="1.300" fill="#f2a12a"/>
<!-- edge -->
<defs><linearGradient id="edg" x1="0" y1="0" x2="1" y2="1"><stop offset="0" stop-color="#35c1b0"/><stop offset="0.500" stop-color="#1b8ed6"/><stop offset="1" stop-color="#0c5fb5"/></linearGradient></defs>
<circle cx="161" cy="12" r="6.800" fill="url(#edg)"/><path d="M157 12.500c0-3 3-4.500 5.500-4 3 .6 4.500 3 4.500 5h-6c0 2 2 3 4 2.500-2 2.500-8 1.500-8-3.500z" fill="#d6f0f4" opacity="0.900"/>
<!-- explorer -->
<path d="M184.500 7.500h5l1.500 1.500h7.500v9h-14z" fill="#f7c64a"/><path d="M184.500 11h14v7h-14z" fill="#fbd970"/><path d="M188 14.500h7v3.500h-7z" fill="#3f8fe0"/>
<!-- monitor -->
<rect x="214" y="6.500" width="13.500" height="9" rx="1" fill="#56b4ee" stroke="#8ea4b6" stroke-width="0.800"/><path d="M218 18.500h5.500" stroke="#9fb2c2" stroke-width="1.400"/>
<!-- excel -->
<rect x="245" y="6" width="12" height="12.500" rx="1" fill="#e8f4ea" stroke="#4c9a5a" stroke-width="0.800"/><path d="M248 9l5.500 6.500M253.500 9l-5.500 6.500" stroke="#1e7a3c" stroke-width="1.800"/>
<!-- word -->
<rect x="274" y="6" width="12" height="12.500" rx="1" fill="#e4eefa" stroke="#4a7fc8" stroke-width="0.800"/><path d="M276.500 9l1.800 6.500 1.700-5 1.700 5 1.800-6.500" fill="none" stroke="#1f5fbf" stroke-width="1.500"/>
<!-- ppt -->
<rect x="303.500" y="6" width="12" height="12.500" rx="1" fill="#fbe9e2" stroke="#d8683e" stroke-width="0.800"/><path d="M307.500 16v-7h2.500a2 2 0 0 1 0 4.200h-2.500" fill="none" stroke="#d2401c" stroke-width="1.600"/>
<!-- chrome -->
<circle cx="339" cy="12" r="6" fill="#e2382c"/><path d="M339 12L333.800 9A6 6 0 0 0 336 17.200z" fill="#2da44e"/><path d="M339 12l-3 5.200A6 6 0 0 0 344.200 9H339z" fill="#f6c32c"/><path d="M339 12h5.200A6 6 0 0 0 333.800 9z" fill="#e2382c"/><circle cx="339" cy="12" r="2.700" fill="#fff"/><circle cx="339" cy="12" r="2.100" fill="#3f86e8"/>
<!-- medibang -->
<circle cx="368.500" cy="12" r="4.300" fill="#2fb7d6"/><path d="M368.500 7.700a4.300 4.300 0 0 0-4 2.600l4 1.700z" fill="#e8432e"/><path d="M368.500 7.700a4.300 4.300 0 0 1 4 2.600l-4 1.700z" fill="#f2a32a"/><path d="M364.500 13.300a4.300 4.300 0 0 0 4 3V12z" fill="#2c8fd0"/><path d="M372.500 13.300a4.300 4.300 0 0 1-4 3V12z" fill="#3fb86a"/><circle cx="368.500" cy="12" r="1.400" fill="#fff"/>
<!-- weather -->
<path d="M713 13a3 3 0 0 1 1-5.500 4 4 0 0 1 7.500.5 2.800 2.800 0 0 1 0 5z" fill="#c6d8e6" stroke="#a9c2d6" stroke-width="0.600"/><path d="M715 15l-1 2.500M718 15l-1 2.500M721 15l-1 2.500" stroke="#4fa3e6" stroke-width="1.200"/>
<!-- chevron -->
<path d="M794.500 14l4.200-4.500 4.200 4.500" fill="none" stroke="#111" stroke-width="1.200"/>
<!-- tray icons -->
<rect x="814.500" y="7.500" width="5" height="9" rx="1.500" fill="none" stroke="#222" stroke-width="1"/><path d="M820.500 10l2.500-1v6l-2.500-1zM814 5.500c2-1.300 4-1.300 6 0M814 18.500c2 1.300 4 1.300 6 0" fill="none" stroke="#222" stroke-width="0.800"/>
<rect x="831.500" y="9.500" width="9" height="5.500" fill="#222"/><path d="M830 8.500v4M829 8v2.500M841 11v2.500" stroke="#222" stroke-width="1"/>
<rect x="850.500" y="6.500" width="10" height="9" fill="none" stroke="#222" stroke-width="1.100"/><path d="M853 9.500h3M853 12h2" stroke="#222" stroke-width="1"/><rect x="857" y="13" width="5" height="5" rx="1" fill="#f08a1c"/>
<path d="M869.500 10.500h2l3-2.800v9l-3-2.800h-2z" fill="none" stroke="#222" stroke-width="1"/><path d="M876.500 9.500c1.200 1.500 1.200 3.500 0 5M878.500 8c2 2.500 2 5.500 0 8" fill="none" stroke="#222" stroke-width="0.900"/>
<path d="M890 17.500a8 8 0 0 1 8-8M892.500 17.500a5.500 5.500 0 0 1 5.500-5.500M895 17.500a3 3 0 0 1 3-3" fill="none" stroke="#222" stroke-width="1.100"/><circle cx="897.200" cy="17" r="1" fill="#222"/>
<!-- notification -->
<path d="M990.500 5.500h14v10h-4.500l-2.500 3v-3h-7z" fill="#111"/><path d="M993 8.500h9M993 10.700h9M993 12.900h5" stroke="#dde9f1" stroke-width="0.900"/>
</svg>
<div class="t" style="left:734px;top:558px;font-size:10.700px;color:#111">82°F</div>
<div class="t" style="left:763px;top:558px;font-size:10.700px;color:#111">Rain</div>
<div class="t" style="left:909px;top:559px;font-size:8.800px;color:#111">ENG</div>
<div class="t" style="left:940px;top:559px;font-size:8.800px;color:#111">8:39 PM</div>
</body></html>
